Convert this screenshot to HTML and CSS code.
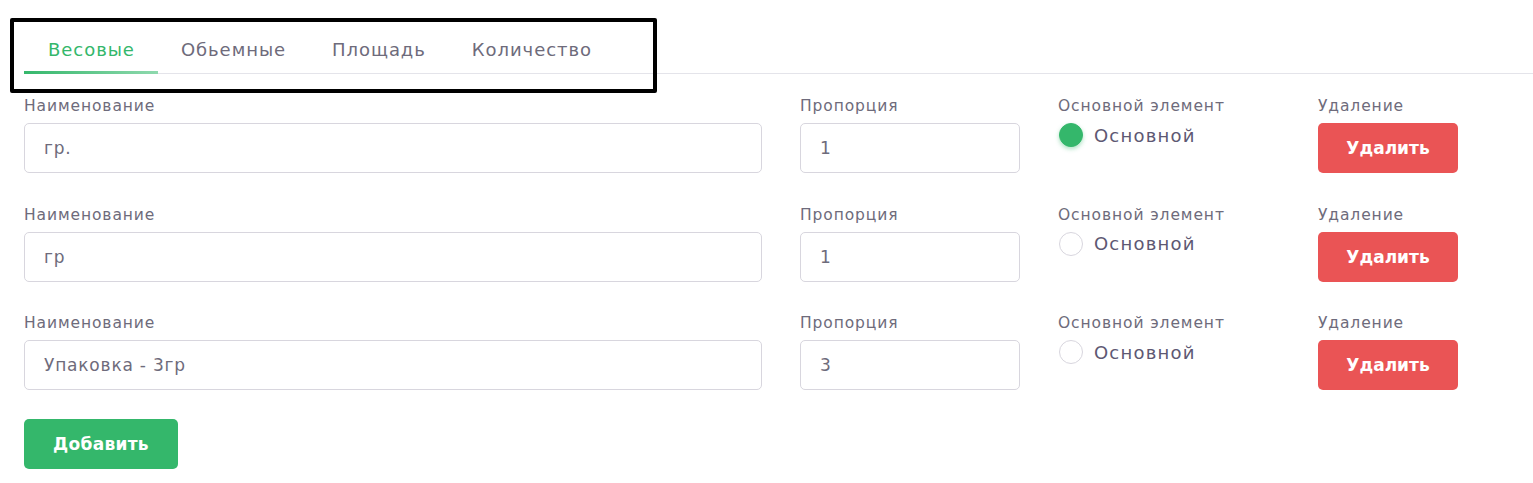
FILE: index.html
```html
<!DOCTYPE html>
<html lang="ru">
<head>
<meta charset="utf-8">
<link rel="stylesheet" href="styles.css">
</head>
<body>
<div class="page">
  <div class="tabs">
    <div class="tab active">Весовые</div>
    <div class="tab">Обьемные</div>
    <div class="tab">Площадь</div>
    <div class="tab">Количество</div>
  </div>
  <div class="highlight"></div>
  <div class="rows">
    <div class="row">
      <div class="field">
        <div class="label">Наименование</div>
        <div class="input">гр.</div>
      </div>
      <div class="field">
        <div class="label">Пропорция</div>
        <div class="input">1</div>
      </div>
      <div class="field">
        <div class="label">Основной элемент</div>
        <div class="radio-line"><span class="radio checked"></span><span class="radio-text">Основной</span></div>
      </div>
      <div class="field">
        <div class="label">Удаление</div>
        <div class="btn danger">Удалить</div>
      </div>
    </div>
    <div class="row">
      <div class="field">
        <div class="label">Наименование</div>
        <div class="input">гр</div>
      </div>
      <div class="field">
        <div class="label">Пропорция</div>
        <div class="input">1</div>
      </div>
      <div class="field">
        <div class="label">Основной элемент</div>
        <div class="radio-line"><span class="radio"></span><span class="radio-text">Основной</span></div>
      </div>
      <div class="field">
        <div class="label">Удаление</div>
        <div class="btn danger">Удалить</div>
      </div>
    </div>
    <div class="row">
      <div class="field">
        <div class="label">Наименование</div>
        <div class="input">Упаковка - 3гр</div>
      </div>
      <div class="field">
        <div class="label">Пропорция</div>
        <div class="input">3</div>
      </div>
      <div class="field">
        <div class="label">Основной элемент</div>
        <div class="radio-line"><span class="radio"></span><span class="radio-text">Основной</span></div>
      </div>
      <div class="field">
        <div class="label">Удаление</div>
        <div class="btn danger">Удалить</div>
      </div>
    </div>
  </div>
  <div class="btn success">Добавить</div>
</div>
</body>
</html>
```

FILE: styles.css
```css
* { box-sizing: border-box; }
html, body { margin: 0; background: #fff; }
body {
  font-family: "DejaVu Sans", "Noto Sans", sans-serif;
  color: #6e6b7b;
}
.page {
  position: relative;
  padding: 26px 0 0 24px;
  width: 1533px;
  height: 483px;
  overflow: hidden;
}
.tabs {
  display: flex;
  border-bottom: 1px solid #e4e4ea;
  height: 48px;
}
.tab {
  padding: 0 23px;
  font-size: 18px;
  line-height: 47px;
  color: #6e6b7b;
  height: 48px;
  letter-spacing: 0.95px;
}
.tab:first-child { padding-left: 24px; }
.tab.active {
  color: #34b76b;
  border-bottom: 3px solid transparent;
  border-image: linear-gradient(90deg, #34b76b, #8fd9ae) 1;
}
.highlight {
  position: absolute;
  left: 10px;
  top: 18px;
  width: 647px;
  height: 75px;
  border: 4px solid #000;
  border-radius: 2px;
}
.rows {
  display: flex;
  flex-direction: column;
  gap: 32.5px;
  margin-top: 23px;
}
.row {
  display: grid;
  grid-template-columns: 738px 220px 222px 140px;
  column-gap: 38px;
}
.field { display: flex; flex-direction: column; }
.label {
  font-size: 15.5px;
  line-height: 18px;
  color: #6e6b7b;
  margin-bottom: 8px;
  letter-spacing: 0.9px;
}
.input {
  height: 50px;
  border: 1px solid #d8d6de;
  border-radius: 5px;
  padding: 0 19px;
  display: flex;
  align-items: center;
  font-size: 17px;
  color: #6e6b7b;
  letter-spacing: 0.8px;
}
.radio-line {
  display: flex;
  align-items: center;
  gap: 11px;
  margin-top: 0;
  padding-left: 1px;
}
.radio {
  width: 24px;
  height: 24px;
  border-radius: 50%;
  border: 1px solid #d8d6de;
  background: #fff;
  flex: none;
}
.radio.checked {
  border-color: #34b76b;
  background: #34b76b;
  box-shadow: 0 2px 4px rgba(52, 183, 107, 0.4);
}
.radio-text { font-size: 18px; color: #5e5873; letter-spacing: 1.2px; }
.btn {
  height: 50px;
  border-radius: 5px;
  color: #fff;
  font-size: 17px;
  font-weight: bold;
  display: flex;
  align-items: center;
  justify-content: center;
}
.btn.danger { background: #ea5455; width: 140px; }
.btn.success { background: #34b76b; width: 154px; margin-top: 29px; letter-spacing: 0.3px; }
```
